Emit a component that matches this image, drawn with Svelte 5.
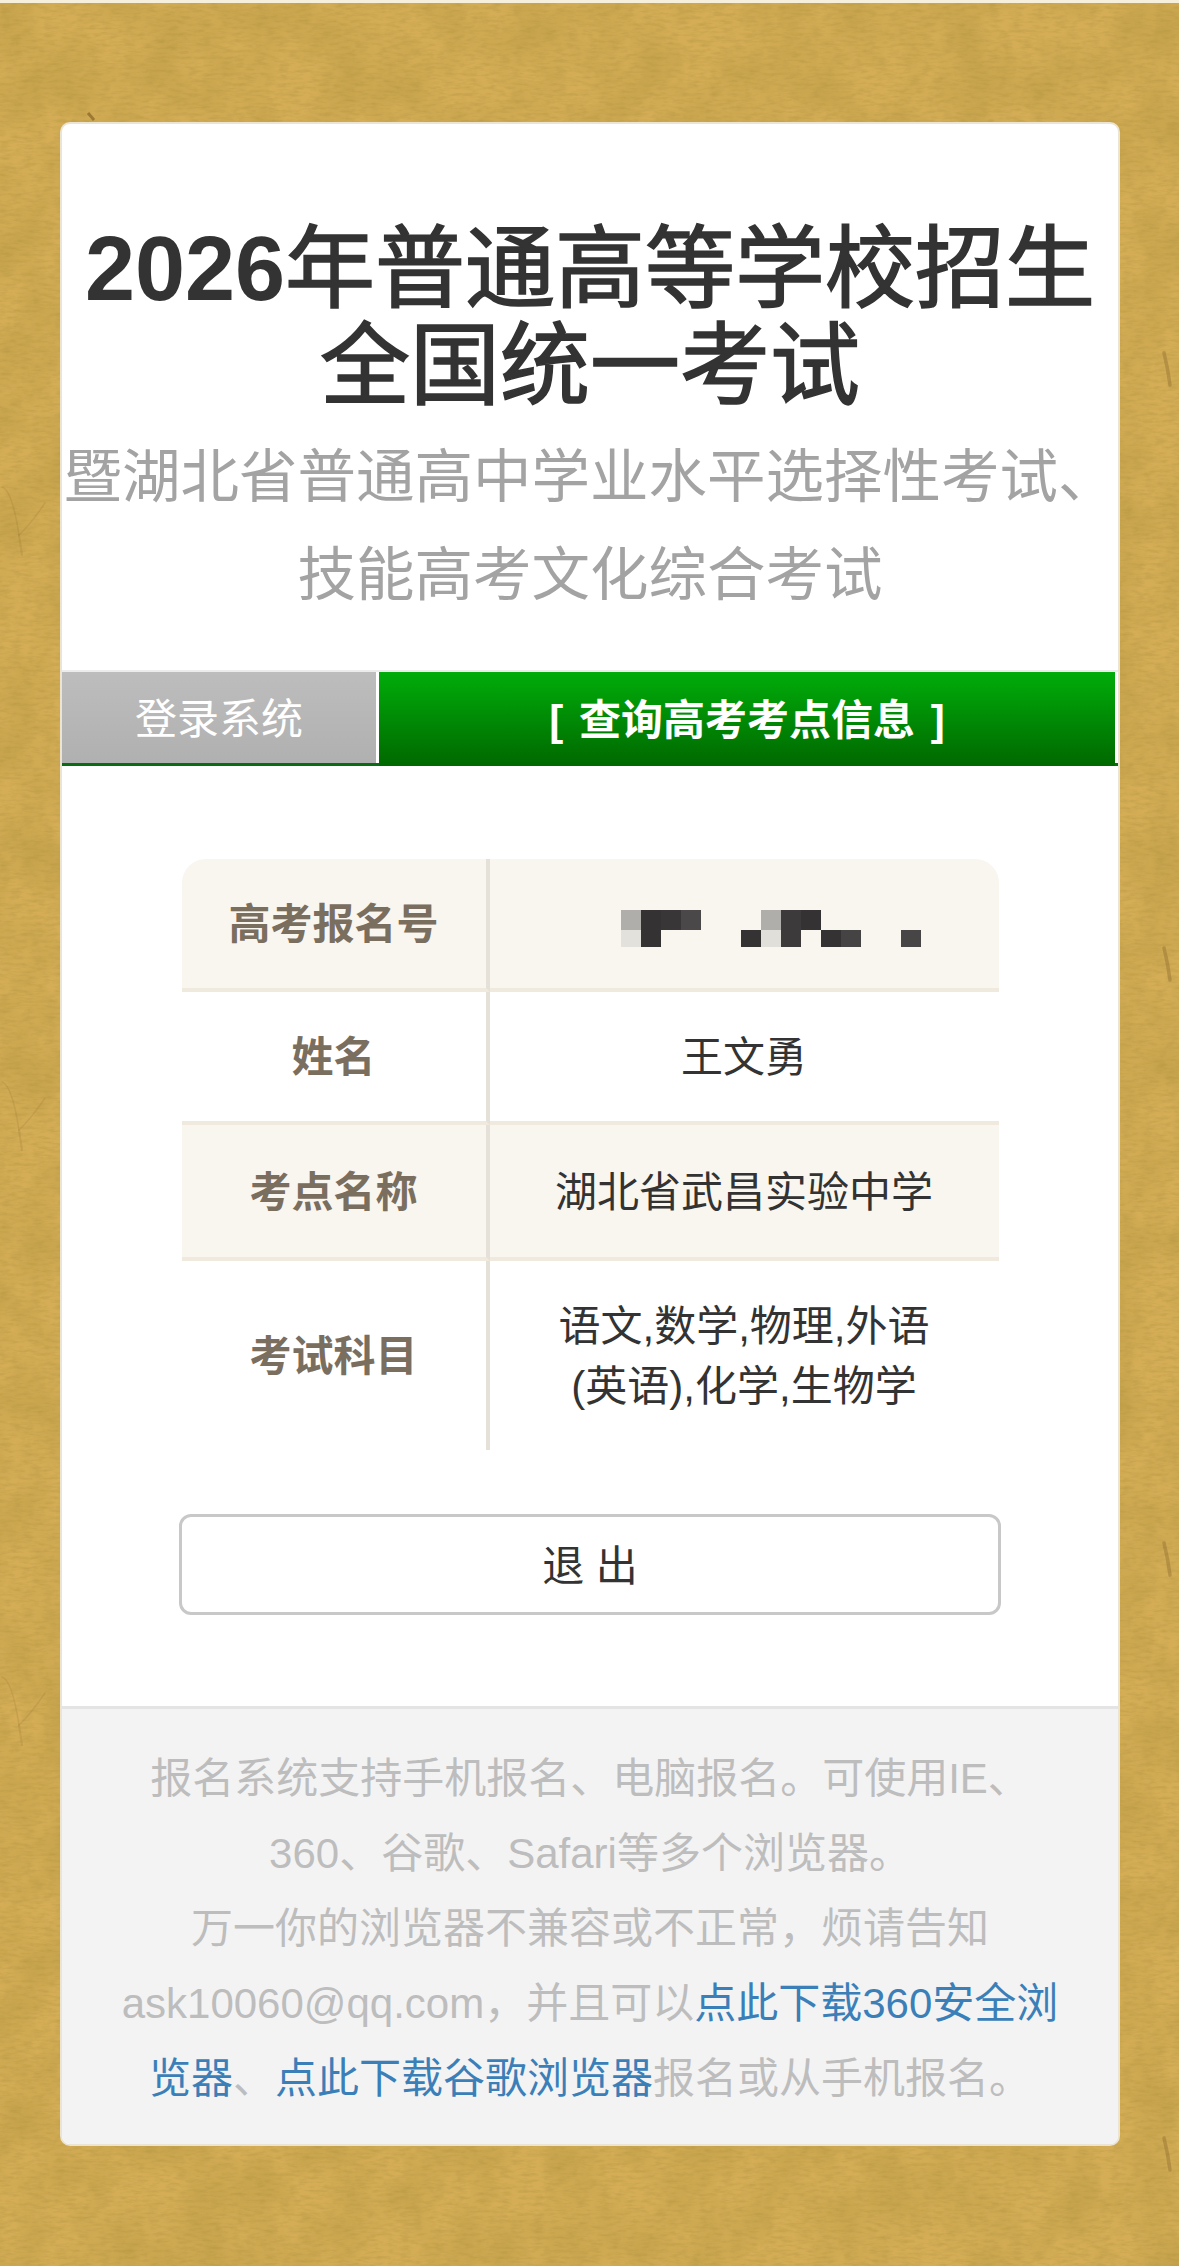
<script>
    // mosaic over the registration number: [col, row, colour]
    const mosaic = [
        [0, 0, "#b0aeab"], [1, 0, "#343233"], [2, 0, "#383637"], [3, 0, "#4a4848"],
        [7, 0, "#b0aeab"], [8, 0, "#3c3a3a"], [9, 0, "#343233"],
        [0, 1, "#e3e1dc"], [1, 1, "#343233"],
        [6, 1, "#343233"], [7, 1, "#e0dfd9"], [8, 1, "#3c3a3a"],
        [10, 1, "#343233"], [11, 1, "#454344"],
        [14, 1, "#474546"]
    ];
    const cell_w = 20;
    const row_y = [0, 20];
    const row_h = [20, 17];

    // the paper pattern repeats down the page, so its creases do too
    const repeats = [0, 1, 2, 3];
    const repeat_h = 595;
</script>

<div class="page">
    <svg class="paper" width="1179" height="2266" aria-hidden="true">
        <defs>
            <filter id="blotches" x="0" y="0" width="100%" height="100%">
                <feTurbulence type="fractalNoise" baseFrequency="0.022 0.018" numOctaves="6" seed="11" />
                <feColorMatrix values="0 0 0 0 0.50  0 0 0 0 0.33  0 0 0 0 0.06  1.2 0 0 0 -0.40" />
            </filter>
            <filter id="grain" x="0" y="0" width="100%" height="100%">
                <feTurbulence type="fractalNoise" baseFrequency="0.09 0.3" numOctaves="3" seed="3" />
                <feColorMatrix values="0 0 0 0 0.44  0 0 0 0 0.29  0 0 0 0 0.05  0 0.9 0 0 -0.36" />
            </filter>
        </defs>
        <rect width="1179" height="2266" fill="#d4ad56" />
        <rect width="1179" height="2266" filter="url(#blotches)" />
        <rect width="1179" height="2266" filter="url(#grain)" />
        {#each repeats as n}
            <g transform="translate(0 {n * repeat_h - 5})" fill="none" stroke="#8a6a2c" stroke-linecap="round">
                <path d="M2 492 Q12 495 19 540 Q30 530 45 508" stroke-width="1.5" opacity="0.18" />
                <path d="M19 540 L22 560" stroke-width="2" opacity="0.18" />
                <path d="M1164 358 Q1168 374 1170 390" stroke-width="3.5" opacity="0.4" />
            </g>
        {/each}
        <path d="M88 113 L94 120" stroke="#7a5a20" stroke-width="3" opacity="0.6" />
    </svg>

    <main class="card">
        <header class="head">
            <h1><b>2026</b>年普通高等学校招生<br />全国统一考试</h1>
            <h2>暨湖北省普通高中学业水平选择性考试、<br />技能高考文化综合考试</h2>
        </header>

        <nav class="tabs">
            <a class="tab" href="#login">登录系统</a>
            <a class="tab current" href="#query">[ 查询高考考点信息 ]</a>
        </nav>

        <section class="body">
            <table>
                <tbody>
                    <tr class="odd">
                        <th>高考报名号</th>
                        <td>
                            <svg class="mosaic" width="300" height="37" role="img" aria-label="报名号">
                                {#each mosaic as [col, row, fill]}
                                    <rect x={col * cell_w} y={row_y[row]} width={cell_w} height={row_h[row]} {fill} />
                                {/each}
                            </svg>
                        </td>
                    </tr>
                    <tr>
                        <th>姓名</th>
                        <td>王文勇</td>
                    </tr>
                    <tr class="odd">
                        <th>考点名称</th>
                        <td>湖北省武昌实验中学</td>
                    </tr>
                    <tr class="last">
                        <th>考试科目</th>
                        <td>语文,数学,物理,外语<br />(英语),化学,生物学</td>
                    </tr>
                </tbody>
            </table>
            <button type="button" class="logout">退 出</button>
        </section>

        <footer class="foot">
            报名系统支持手机报名、电脑报名。可使用IE、<br />
            360、谷歌、Safari等多个浏览器。<br />
            万一你的浏览器不兼容或不正常，烦请告知<br />
            ask10060@qq.com，并且可以<a href="#360">点此下载360安全浏<br />览器</a>、<a href="#chrome">点此下载谷歌浏览器</a>报名或从手机报名。
        </footer>
    </main>
</div>

<style>
    :global(body) {
        margin: 0;
    }
    .page {
        position: relative;
        box-sizing: border-box;
        width: 1179px;
        height: 2266px;
        padding: 122px 59px 0 60px;
        overflow: hidden;
        font-family: "Liberation Sans", "Noto Sans CJK SC", sans-serif;
        color: #333;
    }
    .page::before {
        content: "";
        position: absolute;
        z-index: 1;
        left: 0;
        right: 0;
        top: 0;
        height: 3px;
        background: #f6efdc;
    }
    .paper {
        position: absolute;
        left: 0;
        top: 0;
    }
    .card {
        position: relative;
        box-sizing: border-box;
        width: 1060px;
        height: 2024px;
        display: flex;
        flex-direction: column;
        background: #fff;
        border: 2px solid #ebe4d2;
        border-radius: 10px;
        overflow: hidden;
    }
    .head {
        padding-top: 97px;
        text-align: center;
        white-space: nowrap;
    }
    h1 {
        margin: 0;
        font-size: 90px;
        line-height: 97px;
        font-weight: 400;
        -webkit-text-stroke: 1.6px #333;
    }
    h1 b {
        font-weight: 700;
        -webkit-text-stroke: 0;
    }
    h2 {
        margin: 13px 0 0;
        font-size: 58.5px;
        line-height: 98px;
        font-weight: 400;
        color: #a3a3a3;
    }
    .tabs {
        display: flex;
        margin-top: 46px;
        height: 96px;
        box-sizing: border-box;
        border-top: 2px solid #ececec;
        border-bottom: 3px solid #0a6b14;
    }
    .tab {
        display: flex;
        align-items: center;
        justify-content: center;
        padding-bottom: 5px;
        box-sizing: border-box;
        text-decoration: none;
        color: #fff;
        font-size: 42px;
        width: 314px;
        background: linear-gradient(#bdbdbd, #b0b0b0);
    }
    .current {
        width: 736px;
        margin-left: 3px;
        margin-bottom: -3px;
        font-weight: 700;
        word-spacing: 4px;
        background: linear-gradient(#00ad0a, #006800);
    }
    .body {
        flex: 1;
        padding-top: 93px;
        display: flex;
        flex-direction: column;
        align-items: center;
    }
    table {
        width: 817px;
        height: 591px;
        border-collapse: separate;
        border-spacing: 0;
        table-layout: fixed;
    }
    tr.odd {
        background: #f9f6f0;
    }
    tr.odd:first-child th {
        border-top-left-radius: 24px;
    }
    tr.odd:first-child td {
        border-top-right-radius: 24px;
    }
    th,
    td {
        padding: 3px 0 0;
        font-size: 42px;
        line-height: 60px;
        text-align: center;
        border-bottom: 4px solid #efe9de;
    }
    th {
        width: 304px;
        color: #7a6e5f;
        font-weight: 700;
        border-right: 4px solid #e6e1d8;
    }
    tr:nth-child(1) {
        height: 133px;
    }
    tr:nth-child(2) {
        height: 133px;
    }
    tr:nth-child(3) {
        height: 136px;
    }
    tr.last th,
    tr.last td {
        border-bottom: 0;
    }
    .mosaic {
        display: block;
        margin-left: 131px;
        position: relative;
        top: 3px;
    }
    .logout {
        box-sizing: border-box;
        width: 822px;
        height: 101px;
        margin-top: 64px;
        padding: 0 0 5px;
        background: #fff;
        border: 3px solid #c8c8c8;
        border-radius: 12px;
        font: inherit;
        font-size: 42px;
        color: #333;
    }
    .foot {
        height: 438px;
        box-sizing: border-box;
        padding-top: 32px;
        background: #f3f3f4;
        border-top: 3px solid #e4e4e4;
        font-size: 42px;
        line-height: 75px;
        text-align: center;
        white-space: nowrap;
        color: #bdbdbd;
    }
    .foot a {
        color: #3b7fb8;
        text-decoration: none;
    }
</style>
